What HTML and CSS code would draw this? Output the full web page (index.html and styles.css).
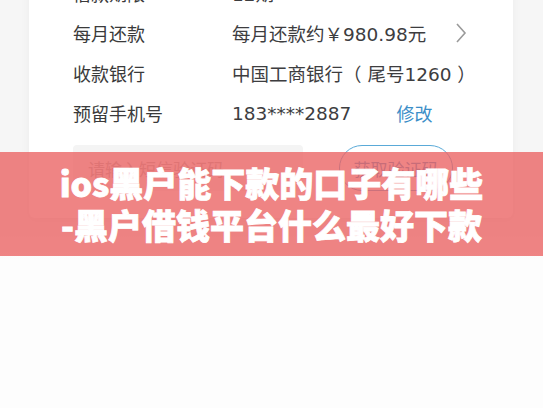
FILE: index.html
```html
<!DOCTYPE html>
<html lang="zh">
<head>
<meta charset="utf-8">
<link rel="stylesheet" href="styles.css">
</head>
<body>
<div class="page">
  <div class="card">
    <div class="row"><span class="label">借款期限</span><span class="value">12期</span></div>
    <div class="row"><span class="label">每月还款</span><span class="value">每月还款约￥980.98元</span><span class="chev"><svg width="12" height="22" viewBox="0 0 12 22"><path d="M2 2 L10 11 L2 20" fill="none" stroke="#9a9a9a" stroke-width="1.6"/></svg></span></div>
    <div class="row"><span class="label">收款银行</span><span class="value">中国工商银行（ 尾号1260 ）</span></div>
    <div class="row"><span class="label">预留手机号</span><span class="value">183****2887</span><span class="edit">修改</span></div>
    <div class="code">
      <div class="input">请输入短信验证码</div>
      <div class="btn">获取验证码</div>
    </div>
  </div>
  <div class="banner">
    <div class="title">ios黑户能下款的口子有哪些<br>-黑户借钱平台什么最好下款</div>
  </div>
</div>
</body>
</html>
```
FILE: styles.css
```css
html, body {
  margin: 0;
  padding: 0;
}
body {
  background: #fcfcfc;
  font-family: "Noto Sans CJK SC", "Noto Sans", sans-serif;
  overflow: hidden;
  height: 408px;
}
.page {
  position: relative;
  display: flow-root;
  height: 408px;
  background: linear-gradient(#f6f6f6 0, #f6f6f6 230px, #fdfdfd 260px);
}
.card {
  margin: -40px 30px 0 29px;
  background: #fff;
  border-radius: 6px;
  box-shadow: 0 2px 10px rgba(0,0,0,0.05);
  padding: 13px 44px 27px 44px;
}
.row {
  height: 40px;
  display: flex;
  align-items: center;
  font-size: 18px;
  color: #333;
}
.label {
  width: 159px;
  flex: none;
  color: #3a3a3a;
}
.value {
  color: #3d3d3f;
  font-family: "DejaVu Sans", "Noto Sans CJK SC", sans-serif;
  font-size: 18.5px;
}
.chev {
  margin-left: auto;
  margin-right: 2px;
  display: flex;
}
.edit {
  margin-left: 45px;
  color: #3b8ec8;
}
.code {
  display: flex;
  align-items: center;
  margin-top: 12px;
  gap: 36px;
}
.input {
  width: 230px;
  height: 46px;
  box-sizing: border-box;
  background: #f4f4f4;
  border-radius: 4px;
  padding-left: 15px;
  display: flex;
  align-items: center;
  font-size: 17px;
  color: #b4b4b4;
}
.btn {
  width: 114px;
  height: 46px;
  box-sizing: border-box;
  border: 1px solid #5aaad8;
  border-radius: 23px;
  display: flex;
  align-items: center;
  justify-content: center;
  font-size: 17px;
  color: #4a95cc;
}
.banner {
  position: absolute;
  left: 0;
  right: 0;
  top: 152px;
  height: 104px;
  background: rgba(234, 98, 98, 0.78);
  display: flex;
  align-items: center;
  justify-content: center;
}
.title {
  color: #fff;
  font-weight: 900;
  font-size: 34px;
  line-height: 42px;
  text-align: center;
  -webkit-text-stroke: 0.8px #fff;
}
```
